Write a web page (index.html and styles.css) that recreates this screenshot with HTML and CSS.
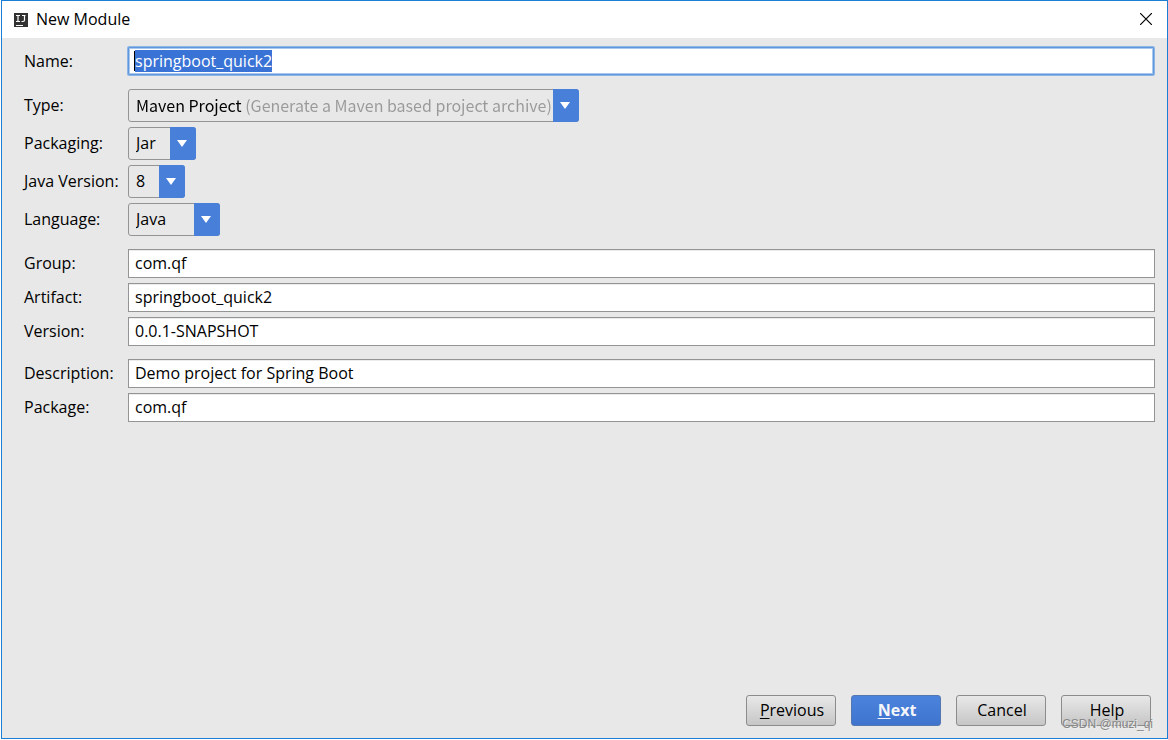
FILE: index.html
```
<!DOCTYPE html>
<html lang="en">
<head>
<meta charset="utf-8">
<title>New Module</title>
<link rel="stylesheet" href="styles.css">
</head>
<body>
<main class="window">
  <header class="titlebar">
    <svg class="app-icon" width="14" height="14" viewBox="0 0 14 14" aria-hidden="true">
      <rect width="14" height="14" fill="#323232"/>
      <path d="M2 2.500h4M4 2.500v6M2 8.500h4M8 2.500h3.500M10.500 2.500v4.500q0 1.500-1.500 1.500H7.500" fill="none" stroke="#fff" stroke-width="1.200"/>
      <path d="M2 12.500h7" stroke="#fff"/>
    </svg>
    <h1 class="title">New Module</h1>
    <button class="close" type="button" aria-label="Close">
      <svg width="12" height="12" viewBox="0 0 12 12" aria-hidden="true"><path d="M0 0l12 12M12 0L0 12" fill="none" stroke="#000" stroke-width="1.200"/></svg>
    </button>
  </header>
  <form class="form">
    <div class="group">
      <div class="row"><label for="name">Name:</label><span class="focus-frame"><input class="field name" id="name" type="text" value="springboot_quick2"></span></div>
    </div>
    <div class="group">
      <div class="row"><label for="type">Type:</label><span class="combo combo-type"><select id="type"><option>Maven Project (Generate a Maven based project archive)</option></select></span></div>
      <div class="row"><label for="packaging">Packaging:</label><span class="combo combo-packaging"><select id="packaging"><option>Jar</option></select></span></div>
      <div class="row"><label for="java">Java Version:</label><span class="combo combo-java"><select id="java"><option>8</option></select></span></div>
      <div class="row"><label for="language">Language:</label><span class="combo combo-language"><select id="language"><option>Java</option></select></span></div>
    </div>
    <div class="group">
      <div class="row"><label for="group">Group:</label><input class="field" id="group" type="text" value="com.qf"></div>
      <div class="row"><label for="artifact">Artifact:</label><input class="field" id="artifact" type="text" value="springboot_quick2"></div>
      <div class="row"><label for="version">Version:</label><input class="field" id="version" type="text" value="0.0.1-SNAPSHOT"></div>
    </div>
    <div class="group">
      <div class="row"><label for="description">Description:</label><input class="field" id="description" type="text" value="Demo project for Spring Boot"></div>
      <div class="row"><label for="package">Package:</label><input class="field" id="package" type="text" value="com.qf"></div>
    </div>
  </form>
  <footer class="actions">
    <button class="button" type="button"><u>P</u>revious</button>
    <button class="button primary" type="button"><u>N</u>ext</button>
    <button class="button" type="button">Cancel</button>
    <button class="button" type="button">Help</button>
  </footer>
  <span class="watermark">CSDN @muzi_qi</span>
</main>
<script src="script.js"></script>
</body>
</html>
```
FILE: styles.css
```
* {
  box-sizing: border-box;
}

body {
  margin: 0;
  min-height: 100vh;
  display: flex;
  padding: 0 0 1px 1px;
  background: #fff;
  color: #000;
  font: 16px/20px "Open Sans", "Noto Sans", sans-serif;
}

input,
select,
button {
  font: inherit;
  color: inherit;
}

.window {
  position: relative;
  flex: 1;
  display: flex;
  flex-direction: column;
  border: 1px solid #1a7fd4;
  background: #e8e8e8;
}

.titlebar {
  display: flex;
  align-items: center;
  height: 37px;
  padding: 0 15px 0 12px;
  background: #fff;
}

.title {
  flex: 1;
  margin: 0 0 0 8px;
  padding-bottom: 2px;
  font-size: 16px;
  font-weight: 400;
}

.close {
  display: flex;
  padding: 0 0 1px;
  border: 0;
  background: none;
}

.form {
  flex: 1;
  display: flex;
  flex-direction: column;
  gap: 13px;
  padding: 9px 12px 0 22px;
}

.group {
  display: flex;
  flex-direction: column;
  gap: 5px;
}

.row {
  display: grid;
  grid-template-columns: 104px 1fr;
  align-items: center;
}

.row label {
  padding-bottom: 2px;
}

.field {
  width: 100%;
  height: 29px;
  padding: 0 6px 2px;
  border: 1px solid #949494;
  border-radius: 0;
  outline: 0;
  background: #fff;
  box-shadow: inset 0 1px #ececec;
}

.focus-frame {
  display: flex;
  padding: 0 1px 1px 0;
}

.name {
  height: 28px;
  padding-bottom: 0;
  border-color: #5e97dc;
  border-radius: 1px;
  background: linear-gradient(#000, #000) 5px 3px / 1px 20px no-repeat #fff;
  box-shadow: 0 0 0 1px #8db5e6, inset 0 0 0 1px #a9c8ee;
}

.name::selection {
  background: #3a73d6;
  color: #fff;
}

.combo {
  position: relative;
  display: block;
  height: 33px;
}

.combo-type {
  width: 451px;
}

.combo-packaging {
  width: 68px;
}

.combo-java {
  width: 57px;
}

.combo-language {
  width: 92px;
}

.combo select {
  appearance: none;
  width: 100%;
  height: 100%;
  padding: 0 26px 2px 7px;
  border: 1px solid #949494;
  border-radius: 3px;
  background: none;
}

.combo-type select {
  color: transparent;
  background: linear-gradient(90deg, #000 114px, #999 114px);
  background-clip: text;
  font-family: "Noto Sans CJK SC", "Noto Sans", sans-serif;
}

.combo::before {
  content: "";
  position: absolute;
  inset: 0 0 0 auto;
  width: 26px;
  border-radius: 0 3px 3px 0;
  background: #487fd9;
  pointer-events: none;
}

.combo::after {
  content: "";
  position: absolute;
  top: 13px;
  right: 9px;
  border: solid transparent;
  border-width: 7px 5px 0;
  border-top-color: #fff;
  pointer-events: none;
}

.actions {
  display: flex;
  justify-content: flex-end;
  gap: 15px;
  padding: 0 16px 12px;
}

.button {
  width: 90px;
  height: 31px;
  padding: 0 0 2px 2px;
  border: 1px solid #8c8c8c;
  border-radius: 3px;
  background: linear-gradient(#e8e8e8, #c6c6c6);
}

.button u {
  text-underline-offset: 2px;
}

.primary {
  border-color: #5377b0;
  background: linear-gradient(#4a83dd, #3f74cd);
  color: #f4f6fa;
  font-weight: 700;
}

.watermark {
  position: absolute;
  right: 14px;
  bottom: 5px;
  color: #888;
  font: 12px/18px "Liberation Sans", sans-serif;
  text-shadow: 1px 1px #eee;
}
```
FILE: script.js
```
const nameField = document.getElementById("name");
nameField.focus();
nameField.select();
```
